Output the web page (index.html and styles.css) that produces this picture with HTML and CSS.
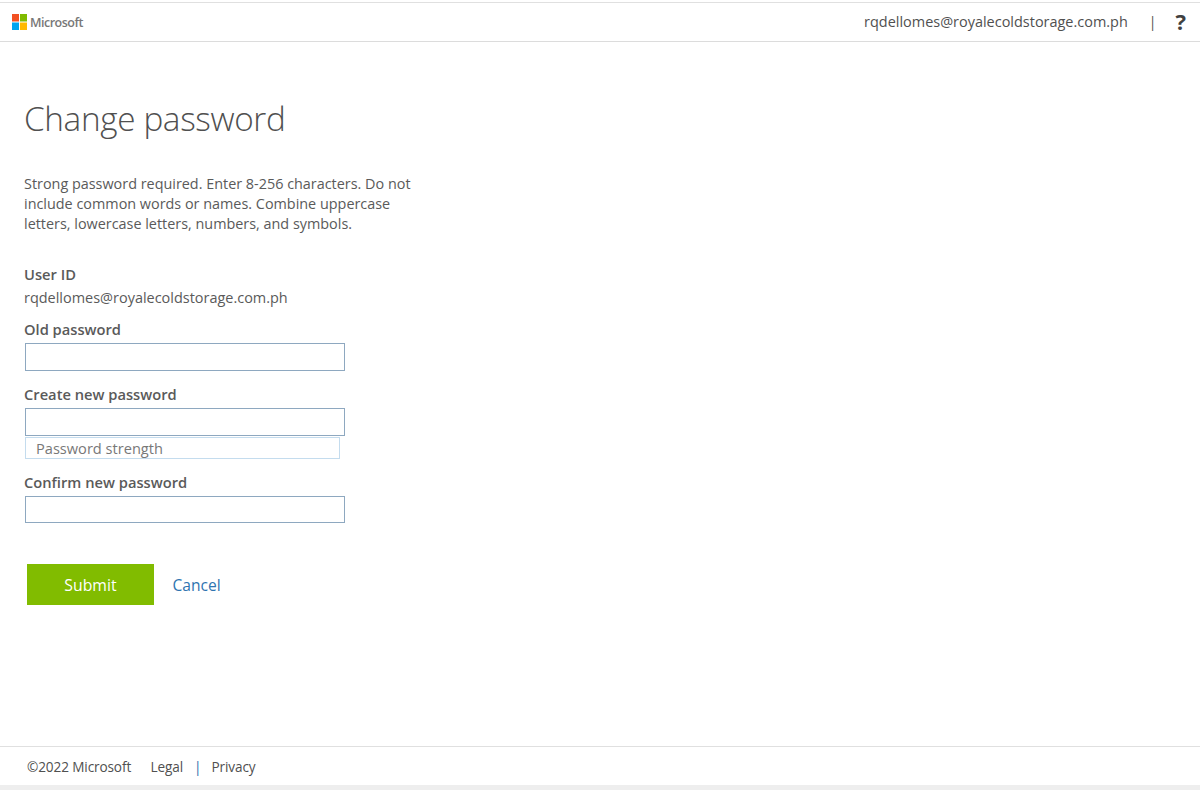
FILE: index.html
```html
<!DOCTYPE html>
<html lang="en">
<head>
<meta charset="utf-8">
<title>Change password</title>
<link rel="stylesheet" href="styles.css">
</head>
<body>
<div class="page">
  <header class="header">
    <div class="logo">
      <svg class="logo-mark" width="15" height="16" viewBox="0 0 15 16" aria-hidden="true">
        <rect x="0" y="0" width="7" height="7.5" fill="#f25022"/>
        <rect x="8" y="0" width="7" height="7.5" fill="#7fba00"/>
        <rect x="0" y="8.5" width="7" height="7.5" fill="#00a4ef"/>
        <rect x="8" y="8.5" width="7" height="7.5" fill="#ffb900"/>
      </svg>
      <span class="logo-text">Microsoft</span>
    </div>
    <div class="account">
      <span class="account-id">rqdellomes@royalecoldstorage.com.ph</span>
      <span class="account-sep">|</span>
      <span class="help">?</span>
    </div>
  </header>
  <main class="main">
    <h1 class="title">Change password</h1>
    <p class="intro">Strong password required. Enter 8-256 characters. Do not include common words or names. Combine uppercase letters, lowercase letters, numbers, and symbols.</p>
    <div class="label label-user">User ID</div>
    <div class="user-id">rqdellomes@royalecoldstorage.com.ph</div>
    <label class="label label-old">Old password</label>
    <div class="input"></div>
    <label class="label label-new">Create new password</label>
    <div class="input"></div>
    <div class="strength">Password strength</div>
    <label class="label label-confirm">Confirm new password</label>
    <div class="input input-short"></div>
    <div class="actions">
      <button class="submit" type="button">Submit</button>
      <a class="cancel" href="#">Cancel</a>
    </div>
  </main>
  <footer class="footer">
    <span class="copyright">©2022 Microsoft</span>
    <a class="foot-link legal" href="#">Legal</a>
    <span class="foot-sep">|</span>
    <a class="foot-link privacy" href="#">Privacy</a>
  </footer>
</div>
</body>
</html>
```
FILE: styles.css
```css
* { box-sizing: border-box; }
html, body { margin: 0; padding: 0; height: 100%; background: #fff; }
body { font-family: "Open Sans", "Noto Sans", sans-serif; color: #5a5a5a; overflow: hidden; }
.page { height: 790px; display: flex; flex-direction: column; padding-top: 2px; }
.header { height: 40px; flex: none; border-top: 1px solid #e0e0e0; border-bottom: 1px solid #dcdcdc; display: flex; align-items: center; justify-content: space-between; padding: 0 14px 2px 12px; }
.logo { display: flex; align-items: center; gap: 3px; margin-top: 2px; }
.logo-text { font-size: 12.5px; font-weight: 600; color: #787878; letter-spacing: -0.5px; }
.account { display: flex; align-items: center; }
.account-id { font-size: 14.46px; color: #505050; }
.account-sep { font-size: 14px; margin-left: 21px; color: #505050; }
.help { font-size: 22px; font-weight: 700; margin-left: 19px; color: #404040; line-height: 1; }
.main { flex: 1; padding: 0 0 0 24px; display: flex; flex-direction: column; align-items: flex-start; }
.title { margin: 54px 0 0; font-size: 33.3px; font-weight: 300; line-height: 44px; color: #505050; letter-spacing: -0.35px; }
.intro { margin: 34px 0 0; width: 400px; font-size: 14.4px; line-height: 20px; color: #5a5a5a; }
.label { display: block; font-size: 14.7px; font-weight: 600; line-height: 20px; color: #5a5a5a; }
.label-user { margin-top: 30px; }
.user-id { margin-top: 4px; font-size: 14.46px; line-height: 20px; }
.label-old { margin-top: 11px; }
.input { margin: 4px 0 0 1px; width: 320px; height: 28px; border: 1px solid #8ea8c0; background: #fff; }
.input-short { height: 27px; }
.label-new { margin-top: 13px; }
.strength { margin: 1px 0 0 1px; width: 315px; height: 22px; border: 1px solid #c4dcee; font-size: 14.6px; line-height: 20px; padding-left: 10px; color: #787878; }
.label-confirm { margin-top: 13px; }
.actions { margin: 41px 0 0 3px; display: flex; align-items: center; gap: 19px; }
.submit { width: 127px; height: 41px; border: 0; background: #81bc00; color: #fff; font: 15.8px "Open Sans", sans-serif; padding: 0; }
.cancel { font-size: 15.6px; color: #2f74b0; text-decoration: none; margin-left: -0.5px; }
.footer { height: 39px; flex: none; border-top: 1px solid #e0e0e0; display: flex; align-items: center; padding: 1px 0 0 27px; font-size: 13.6px; color: #505050; letter-spacing: -0.12px; }
.foot-link { color: #505050; text-decoration: none; }
.legal { margin-left: 19.5px; }
.foot-sep { margin: 0 10px 0 11px; color: #2b6ca8; }
.page::after { content: ""; display: block; flex: none; height: 5px; background: #eeeeee; }
```
